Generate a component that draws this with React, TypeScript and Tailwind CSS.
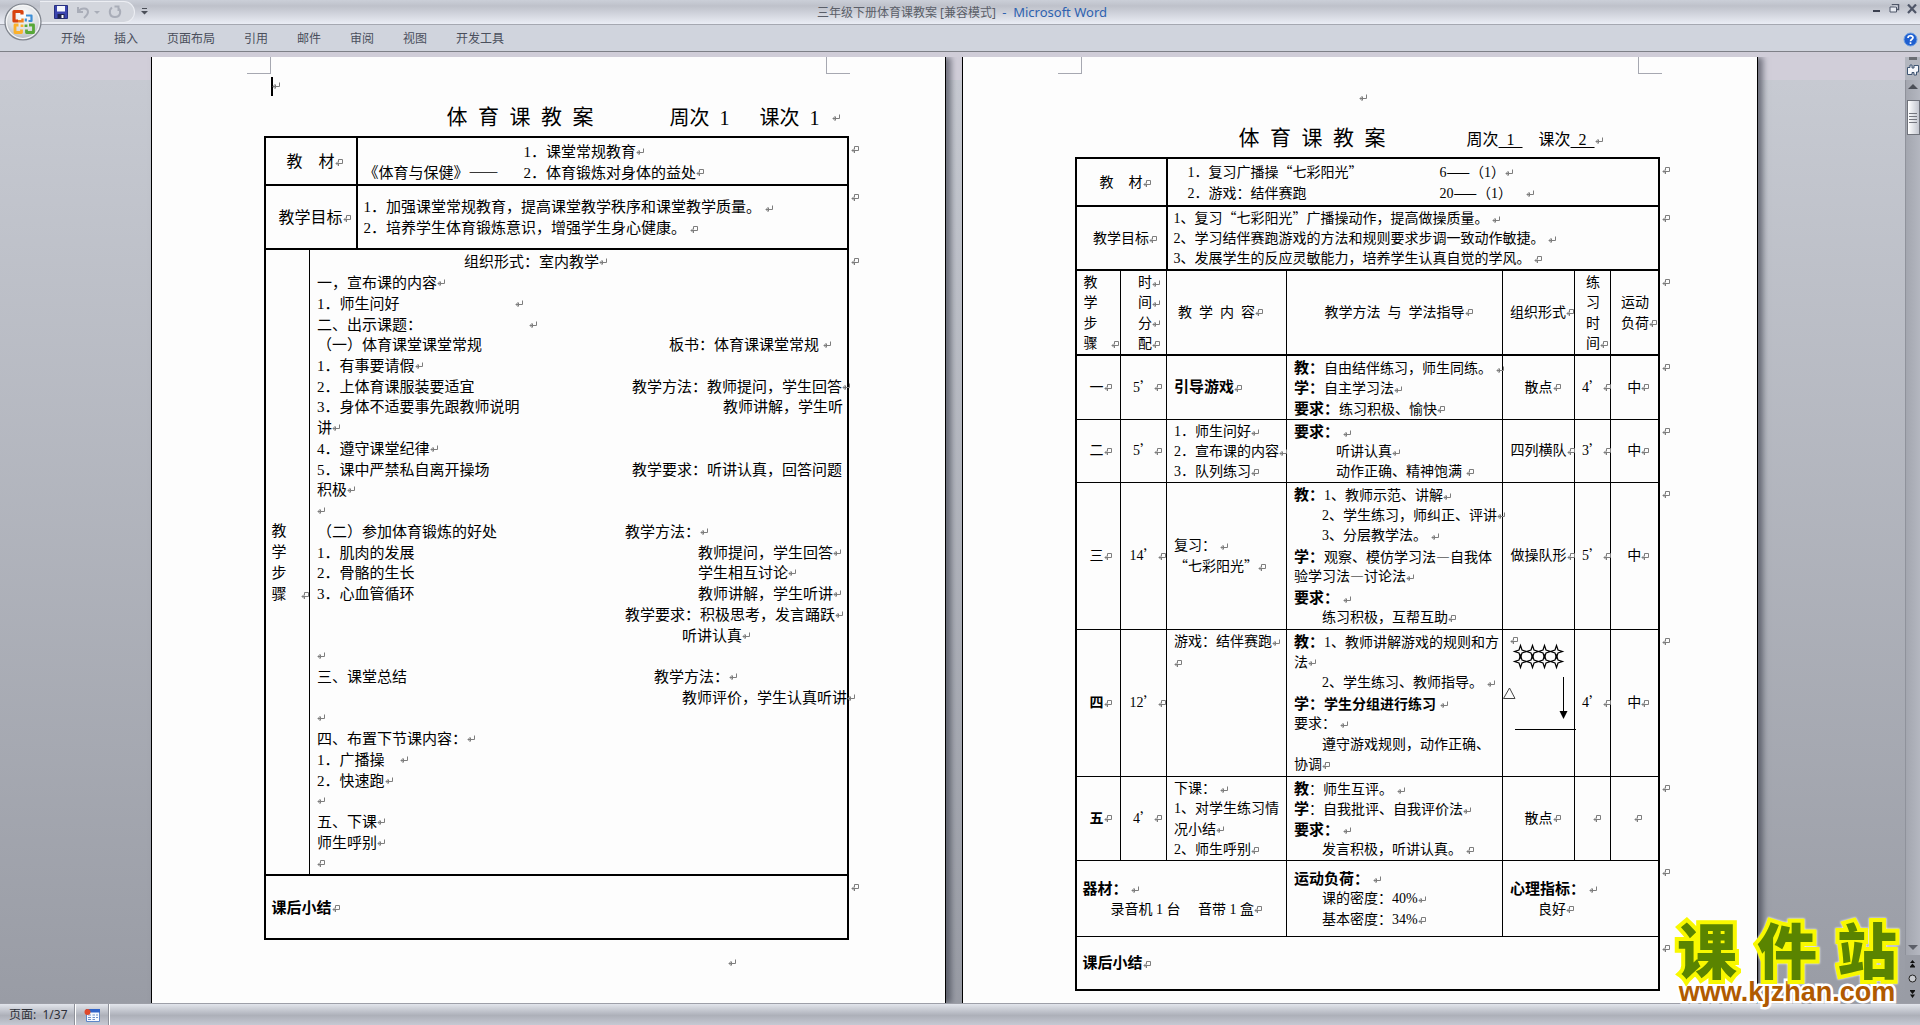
import React from "react";

const body = "font-['Liberation_Serif','Noto_Sans_CJK_SC',serif]";

/* Curly quotes and dashes take the full-width Chinese form. */
function T({ children }: { children: string }) {
  return (
    <>
      {children.split(/([“”’—]+)/).map((part, i) =>
        /[“”’—]/.test(part) ? (
          <span key={i} className="font-['Noto_Sans_CJK_SC',sans-serif] leading-none">
            {part}
          </span>
        ) : (
          part
        ),
      )}
    </>
  );
}

function Mark({ cell, className = "" }: { cell?: boolean; className?: string }) {
  return (
    <svg
      viewBox="0 0 8 8"
      className={`-mr-2 inline-block h-2 w-2 shrink-0 align-middle ${className}`}
      fill="none"
      stroke="#7d7d7d"
      strokeWidth="1"
      aria-hidden="true"
    >
      {cell ? <path d="M3.5 3.5V.5H7.5V4.5H1M3 2.5L1 4.5L3 6.5M3.5 5V7" /> : <path d="M7.5 .5V4.5H1M3.5 2L1 4.5L3.5 7M3.5 3V6" />}
    </svg>
  );
}

function RowEnd() {
  return (
    <span className="absolute top-2 left-full ml-1 flex">
      <Mark cell />
    </span>
  );
}

function Lines({ children, className = "" }: { children: React.ReactNode; className?: string }) {
  return <div className={`grid auto-rows-[minmax(0,1fr)] pt-[2px] leading-5 whitespace-pre ${className}`}>{children}</div>;
}

type LessonLine = { left?: string; col?: string; right?: string; mark?: "p" | "c" };

const lesson: LessonLine[] = [
  { col: "w-[147px]", right: "组织形式：室内教学", mark: "p" },
  { left: "一，宣布课的内容", mark: "p" },
  { left: "1．师生问好", col: "w-[198px]", mark: "p" },
  { left: "二、出示课题：", col: "w-[212px]", mark: "p" },
  { left: "（一）体育课堂课堂常规", col: "w-[352px]", right: "板书：体育课课堂常规 ", mark: "p" },
  { left: "1．有事要请假", mark: "p" },
  { left: "2．上体育课服装要适宜", col: "w-[315px]", right: "教学方法：教师提问，学生回答", mark: "p" },
  { left: "3．身体不适要事先跟教师说明", col: "w-[406px]", right: "教师讲解，学生听" },
  { left: "讲", mark: "p" },
  { left: "4．遵守课堂纪律", mark: "p" },
  { left: "5．课中严禁私自离开操场", col: "w-[315px]", right: "教学要求：听讲认真，回答问题" },
  { left: "积极", mark: "p" },
  { mark: "p" },
  { left: "（二）参加体育锻炼的好处", col: "w-[308px]", right: "教学方法：", mark: "p" },
  { left: "1．肌肉的发展", col: "w-[381px]", right: "教师提问，学生回答", mark: "p" },
  { left: "2．骨骼的生长", col: "w-[381px]", right: "学生相互讨论", mark: "p" },
  { left: "3．心血管循环", col: "w-[381px]", right: "教师讲解，学生听讲", mark: "p" },
  { col: "w-[308px]", right: "教学要求：积极思考，发言踊跃", mark: "p" },
  { col: "w-[365px]", right: "听讲认真", mark: "p" },
  { mark: "p" },
  { left: "三、课堂总结", col: "w-[337px]", right: "教学方法：", mark: "p" },
  { col: "w-[365px]", right: "教师评价，学生认真听讲", mark: "p" },
  { mark: "p" },
  { left: "四、布置下节课内容：", mark: "p" },
  { left: "1．广播操    ", mark: "p" },
  { left: "2．快速跑", mark: "p" },
  { mark: "p" },
  { left: "五、下课", mark: "p" },
  { left: "师生呼别", mark: "p" },
  { mark: "c" },
];

const sheet = "shrink-0 border-x border-black bg-[#fdfdfd] shadow-[5px_0_6px_0_rgba(50,54,66,0.6)]";

function Corners() {
  return (
    <div className="flex justify-between px-[95px]">
      <span className="h-[17px] w-6 border-r border-b border-[#a6a8b1]" />
      <span className="h-[17px] w-6 border-b border-l border-[#a6a8b1]" />
    </div>
  );
}

function PageOne() {
  return (
    <article className={`w-[795px] ${sheet}`}>
      <Corners />
      <div className="mt-[2px] flex h-5 items-center pl-[119px]">
        <span className="h-[19px] w-[2px] bg-black" />
        <Mark className="-ml-px" />
      </div>
      <div className="flex h-10 items-center pt-[3px] pl-[295px] whitespace-pre">
        <h1 className="text-[21px]">{"体\u2002育\u2002课\u2002教\u2002案"}</h1>
        <p className="ml-[76px] text-xl">{"周次\u20021\u2003\u2002课次\u20021"}</p>
        <Mark className="ml-3" />
      </div>
      <table className="ml-[112px] w-[585px] table-fixed border-collapse border-2 border-black text-[15px]">
        <colgroup>
          <col className="w-[45px]" />
          <col className="w-[47px]" />
          <col />
        </colgroup>
        <tbody>
          <tr className="h-12 border-b-2 border-black">
            <td colSpan={2} className="border-r-2 border-black p-0 pt-[2px] text-center text-base">
              教　材
              <Mark cell />
            </td>
            <td className="relative p-0">
              <Lines className="h-11 pl-[6px]">
                <div className="flex items-center">
                  <span className="w-40" />
                  <span>1．课堂常规教育</span>
                  <Mark />
                </div>
                <div className="flex items-center">
                  <span className="w-40"><T>《体育与保健》——</T></span>
                  <span>2．体育锻炼对身体的益处</span>
                  <Mark cell />
                </div>
              </Lines>
              <RowEnd />
            </td>
          </tr>
          <tr className="h-16 border-b-2 border-black">
            <td colSpan={2} className="border-r-2 border-black p-0 pt-[2px] text-center text-base">
              教学目标
              <Mark cell />
            </td>
            <td className="relative p-0">
              <Lines className="h-11 pl-[6px]">
                <div>
                  1．加强课堂常规教育，提高课堂教学秩序和课堂教学质量。 <Mark />
                </div>
                <div>
                  2．培养学生体育锻炼意识，增强学生身心健康。 <Mark cell />
                </div>
              </Lines>
              <RowEnd />
            </td>
          </tr>
          <tr className="h-[626px] border-b-2 border-black">
            <td className="border-r border-black p-0 pl-[6px]">
              <Lines className="h-[86px]">
                <div>教</div>
                <div>学</div>
                <div>步</div>
                <div>
                  骤<Mark cell className="ml-[14px]" />
                </div>
              </Lines>
            </td>
            <td colSpan={2} className="relative p-0">
              <Lines className="h-[624px] pl-[7px]">
                {lesson.map((l, i) => (
                  <div key={i} className="flex items-center">
                    <span className={`shrink-0 ${l.col ?? ""}`}>{l.left}</span>
                    <span>{l.right}</span>
                    {l.mark && <Mark cell={l.mark === "c"} />}
                  </div>
                ))}
              </Lines>
              <RowEnd />
            </td>
          </tr>
          <tr className="h-16">
            <td colSpan={3} className="relative p-0 pt-[2px] pl-[6px] font-bold">
              课后小结
              <Mark cell />
              <RowEnd />
            </td>
          </tr>
        </tbody>
      </table>
      <div className="mt-[10px] pl-[576px]">
        <Mark />
      </div>
    </article>
  );
}

function B({ children }: { children: string }) {
  return <b className="text-[15px] font-bold">{children}</b>;
}

type Step = {
  no: string;
  strong?: boolean;
  time: string;
  row: string;
  body: string;
  contentTop?: boolean;
  content: React.ReactNode;
  method: React.ReactNode[];
  form: React.ReactNode;
  practice: string;
  load: string;
};

function Formation() {
  const stars = [0, 12, 24, 36].flatMap((x) => [
    [x, 0],
    [x, 10],
  ]);
  return (
    <svg viewBox="0 0 76 146" className="absolute top-0 left-0 h-[146px] w-[76px]" fill="none" stroke="#000" strokeWidth="1" aria-label="队形图">
      {stars.map(([x, y]) => (
        <path
          key={`${x}-${y}`}
          transform={`translate(${x + 17.5} ${y + 21.5})`}
          d="M0 -6L1.5 -1.5L6 0L1.5 1.5L0 6L-1.5 1.5L-6 0L-1.5 -1.5Z"
          strokeWidth="1.2"
        />
      ))}
      <path d="M60.5 47V84M12 99.500H73" />
      <path d="M56.500 81H64.500L60.500 89Z" fill="#000" stroke="none" />
      <path d="M6.500 58L12 68.500H.5Z" stroke="#444" />
    </svg>
  );
}

const steps: Step[] = [
  {
    no: "一",
    time: "5’",
    row: "h-16",
    body: "h-[63px]",
    content: (
      <div>
        <B>引导游戏</B>
        <Mark cell />
      </div>
    ),
    method: [
      <><B>教：</B>自由结伴练习，师生同练。 <Mark /></>,
      <><B>学：</B>自主学习法<Mark /></>,
      <><B>要求：</B>练习积极、愉快<Mark cell /></>,
    ],
    form: "散点",
    practice: "4’",
    load: "中",
  },
  {
    no: "二",
    time: "5’",
    row: "h-[63px]",
    body: "h-[62px]",
    content: (
      <Lines className="h-[62px]">
        <div>1．师生问好<Mark /></div>
        <div>2．宣布课的内容<Mark /></div>
        <div>3．队列练习<Mark cell /></div>
      </Lines>
    ),
    method: [
      <><B>要求：</B> <Mark /></>,
      <>　　　听讲认真<Mark /></>,
      <>　　　动作正确、精神饱满 <Mark cell /></>,
    ],
    form: "四列横队",
    practice: "3’",
    load: "中",
  },
  {
    no: "三",
    time: "14’",
    row: "h-[147px]",
    body: "h-[146px]",
    content: (
      <Lines className="h-11">
        <div>复习： <Mark /></div>
        <div><T>“七彩阳光”</T><Mark cell /></div>
      </Lines>
    ),
    method: [
      <><B>教：</B>1、教师示范、讲解<Mark /></>,
      <>　　2、学生练习，师纠正、评讲<Mark /></>,
      <>　　3、分层教学法。 <Mark /></>,
      <><B>学：</B><T>观察、模仿学习法—自我体</T></>,
      <><T>验学习法—讨论法</T><Mark /></>,
      <><B>要求：</B> <Mark /></>,
      <>　　练习积极，互帮互助<Mark cell /></>,
    ],
    form: "做操队形",
    practice: "5’",
    load: "中",
  },
  {
    no: "四",
    strong: true,
    time: "12’",
    row: "h-[147px]",
    body: "h-[146px]",
    contentTop: true,
    content: (
      <Lines className="h-11">
        <div>游戏：结伴赛跑<Mark /></div>
        <div><Mark cell /></div>
      </Lines>
    ),
    method: [
      <><B>教：</B>1、教师讲解游戏的规则和方</>,
      <>法<Mark /></>,
      <>　　2、学生练习、教师指导。 <Mark /></>,
      <><B>学：</B><b>学生分组进行练习</b> <Mark /></>,
      <>要求： <Mark /></>,
      <>　　遵守游戏规则，动作正确、</>,
      <>协调<Mark cell /></>,
    ],
    form: <Formation />,
    practice: "4’",
    load: "中",
  },
  {
    no: "五",
    strong: true,
    time: "4’",
    row: "h-[84px]",
    body: "h-[83px]",
    content: (
      <Lines className="h-[83px]">
        <div>下课： <Mark /></div>
        <div>1、对学生练习情</div>
        <div>况小结<Mark /></div>
        <div>2、师生呼别<Mark cell /></div>
      </Lines>
    ),
    method: [
      <><B>教</B>：师生互评。 <Mark /></>,
      <><B>学</B>：自我批评、自我评价法<Mark /></>,
      <><B>要求：</B> <Mark /></>,
      <>　　发言积极，听讲认真。 <Mark cell /></>,
    ],
    form: "散点",
    practice: "",
    load: "",
  },
];

const cell = "relative border-r border-black p-0 whitespace-nowrap";

function PageTwo() {
  return (
    <article className={`w-[796px] ${sheet}`}>
      <Corners />
      <div className="flex h-[46px] items-center pt-[2px] pl-[396px]">
        <Mark />
      </div>
      <div className="flex h-[37px] items-center pl-[276px] whitespace-pre">
        <h2 className="text-[21px]">{"体\u2002育\u2002课\u2002教\u2002案"}</h2>
        <p className="ml-[81px] pt-[2px] text-base">
          周次<u className="underline-offset-2">{"\u20021\u2002"}</u>
          {"\u2003"}课次<u className="underline-offset-2">{"\u20022\u2002"}</u>
        </p>
        <Mark className="mt-1" />
      </div>
      <table className="ml-[112px] w-[585px] table-fixed border-collapse border-2 border-black text-sm">
        <colgroup>
          <col className="w-[45px]" />
          <col className="w-[46px]" />
          <col className="w-[120px]" />
          <col className="w-[216px]" />
          <col className="w-[72px]" />
          <col className="w-[36px]" />
          <col />
        </colgroup>
        <tbody>
          <tr className="h-12 border-b-2 border-black">
            <td colSpan={2} className="border-r-2 border-black p-0 pt-[2px] text-center">
              {"教　\u200a材"}
              <Mark cell />
            </td>
            <td colSpan={5} className="relative p-0">
              <Lines className="h-11 pl-5">
                <div className="flex items-center">
                  <span className="w-[252px]"><T>1．复习广播操“七彩阳光”</T></span>
                  <span><T>6——（1）</T></span>
                  <Mark />
                </div>
                <div className="flex items-center">
                  <span className="w-[252px]">2．游戏：结伴赛跑</span>
                  <span><T>{"20——（1）\u2003"}</T></span>
                  <Mark />
                </div>
              </Lines>
              <RowEnd />
            </td>
          </tr>
          <tr className="h-16 border-b-2 border-black">
            <td colSpan={2} className="border-r-2 border-black p-0 pt-[2px] text-center">
              教学目标
              <Mark cell />
            </td>
            <td colSpan={5} className="relative p-0">
              <Lines className="h-[62px] pl-[6px]">
                <div><T>1、复习“七彩阳光”广播操动作，提高做操质量。 </T><Mark /></div>
                <div>2、学习结伴赛跑游戏的方法和规则要求步调一致动作敏捷。 <Mark /></div>
                <div>3、发展学生的反应灵敏能力，培养学生认真自觉的学风。 <Mark cell /></div>
              </Lines>
              <RowEnd />
            </td>
          </tr>
          <tr className="h-[85px] border-b-2 border-black">
            <td className={`${cell} pl-[7px]`}>
              <Lines className="h-[83px]">
                <div>教</div>
                <div>学</div>
                <div>步</div>
                <div>骤<Mark cell className="ml-[13px]" /></div>
              </Lines>
            </td>
            <td className={`${cell} pl-[17px]`}>
              <Lines className="h-[83px]">
                <div>时<Mark /></div>
                <div>间<Mark /></div>
                <div>分<Mark /></div>
                <div>配<Mark cell /></div>
              </Lines>
            </td>
            <td className={`${cell} pl-[11px]`}>{"教\u2002学\u2002内\u2002容"}<Mark cell /></td>
            <td className={`${cell} text-center`}>{"教学方法\u2002与\u2002学法指导"}<Mark cell /></td>
            <td className={`${cell} pl-[7px]`}>组织形式<Mark cell /></td>
            <td className={`${cell} pl-[11px]`}>
              <Lines className="h-[83px]">
                <div>练</div>
                <div>习</div>
                <div>时</div>
                <div>间<Mark cell /></div>
              </Lines>
            </td>
            <td className="relative p-0 pl-[10px]">
              <Lines className="h-11">
                <div>运动</div>
                <div>负荷<Mark cell /></div>
              </Lines>
              <RowEnd />
            </td>
          </tr>
          {steps.map((s) => (
            <tr key={s.no} className={`${s.row} border-b border-black`}>
              <td className={`${cell} pl-[13px] ${s.strong ? "font-bold" : ""}`}>{s.no}<Mark cell /></td>
              <td className={`${cell} text-center`}><T>{s.time}</T><Mark cell /></td>
              <td className={`${cell} pl-[7px] ${s.contentTop ? "align-top" : ""}`}>{s.content}</td>
              <td className={`${cell} pl-[7px]`}>
                <Lines className={s.body}>
                  {s.method.map((m, i) => (
                    <div key={i}>{m}</div>
                  ))}
                </Lines>
              </td>
              {typeof s.form === "string" ? (
                <td className={`${cell} text-center`}>{s.form}<Mark cell /></td>
              ) : (
                <td className={`${cell} pl-[7px] align-top`}><Mark cell />{s.form}</td>
              )}
              <td className={`${cell} text-center`}><T>{s.practice}</T><Mark cell /></td>
              <td className="relative p-0 text-center">
                {s.load}
                <Mark cell />
                <RowEnd />
              </td>
            </tr>
          ))}
          <tr className="h-[76px] border-b border-black">
            <td colSpan={3} className={`${cell} pl-[6px]`}>
              <Lines className="h-11">
                <div><B>器材：</B> <Mark /></div>
                <div>　　录音机 1 台{"\u2003 "}音带 1 盒<Mark cell /></div>
              </Lines>
            </td>
            <td className={`${cell} pl-[7px]`}>
              <Lines className="h-16">
                <div><B>运动负荷：</B> <Mark /></div>
                <div>　　课的密度：40%<Mark /></div>
                <div>　　基本密度：34%<Mark cell /></div>
              </Lines>
            </td>
            <td colSpan={3} className="relative p-0 pl-[7px]">
              <Lines className="h-11">
                <div><B>心理指标：</B> <Mark /></div>
                <div>　　良好<Mark cell /></div>
              </Lines>
              <RowEnd />
            </td>
          </tr>
          <tr className="h-[53px]">
            <td colSpan={7} className="relative p-0 pt-[2px] pl-[6px]">
              <B>课后小结</B>
              <Mark cell />
              <RowEnd />
            </td>
          </tr>
        </tbody>
      </table>
    </article>
  );
}

function OfficeLogo() {
  return (
    <svg viewBox="0 0 38 38" className="h-[38px] w-[38px]">
      <defs>
        <radialGradient id="orb" cx="50%" cy="30%" r="75%">
          <stop offset="0" stopColor="#ffffff" />
          <stop offset="0.6" stopColor="#d9dce0" />
          <stop offset="1" stopColor="#a9adb3" />
        </radialGradient>
      </defs>
      <circle cx="19" cy="19" r="18" fill="url(#orb)" stroke="#7f848d" strokeWidth="1.200" />
      <circle cx="19" cy="19" r="16.500" fill="none" stroke="#f6f7f8" strokeWidth="1.200" />
      <path d="M18 11.500V8.500H10V18H14" fill="none" stroke="#d8430f" strokeWidth="3.200" strokeLinejoin="round" />
      <path d="M14 18.300H18.500V15.500" fill="none" stroke="#f0801e" strokeWidth="2.400" />
      <path d="M22 12.500H27.500V18H24.500M21.800 15.500V18.500" fill="none" stroke="#3f8fd6" strokeWidth="2.200" strokeLinejoin="round" />
      <path d="M14.500 22H11V29.500H17.500V26.500M18 24V21.500" fill="none" stroke="#fbb12a" strokeWidth="2.800" strokeLinejoin="round" />
      <path d="M25 22H29.500V29.500H22.500V26.500M22 24V21.500" fill="none" stroke="#58a838" strokeWidth="2.800" strokeLinejoin="round" />
    </svg>
  );
}

const tabs = ["开始", "插入", "页面布局", "引用", "邮件", "审阅", "视图", "开发工具"];

export default function App() {
  return (
    <div lang="zh-CN" className="relative flex h-screen flex-col overflow-hidden bg-[#d0cdd8] font-['Noto_Sans','Noto_Sans_CJK_SC',sans-serif] text-black">
      <header className="relative shrink-0">
        <div className="relative flex h-[25px] items-start justify-center border-b border-[#a5a8b1] bg-linear-to-b from-[#cbcfd8] via-[#bec1ca] via-25% to-[#eaedf5] pl-1">
          <div className="absolute top-px left-10 flex h-[22px] w-[95px] items-center rounded-r-full border border-l-0 border-[#eceef3] bg-[#d3d6dd] pl-[14px]">
            <button aria-label="保存">
              <svg viewBox="0 0 14 14" className="h-[14px] w-[14px]">
                <path d="M.5 .5H13.500V13.500H.5Z" fill="#3b45b0" stroke="#27307f" />
                <path d="M3 1H11V6.500H3Z" fill="#f4f7fd" />
                <path d="M3.500 9H10.500V13.500H3.500Z" fill="#1d2250" />
                <path d="M7.500 10H9.500V13H7.500Z" fill="#fff" />
              </svg>
            </button>
            <button aria-label="撤消" className="ml-2">
              <svg viewBox="0 0 14 14" className="h-[14px] w-[14px]" fill="none" stroke="#a9adb8" strokeWidth="2">
                <path d="M2 2V7H7M2.500 6.500C5 2.500 12 2.500 12 7C12 9.500 10 11 8 13" />
              </svg>
            </button>
            <span className="ml-1 border-x-3 border-t-3 border-x-transparent border-t-[#a9adb8]" />
            <button aria-label="恢复" className="ml-2">
              <svg viewBox="0 0 14 14" className="h-[14px] w-[14px]" fill="none" stroke="#a9adb8" strokeWidth="2">
                <path d="M4 2.500C.5 5 1 12 7 12S13.500 5 10 3M6.500 1.500H10.500V6" />
              </svg>
            </button>
          </div>
          <button aria-label="自定义快速访问工具栏" className="absolute top-2 left-[141px]">
            <svg viewBox="0 0 7 7" className="h-[7px] w-[7px]" fill="#4b4f58">
              <path d="M1 0H6V1H1ZM0 3H7L3.500 6.500Z" />
            </svg>
          </button>
          <p className="pt-[3px] text-xs leading-[18px] whitespace-pre text-[#5a5e68]">
            三年级下册体育课教案 [兼容模式]  <span className="text-[13px] text-[#2e62b0]">-  Microsoft Word</span>
          </p>
          <div className="absolute top-1 right-[2px] flex gap-[6px]">
            <button aria-label="最小化">
              <svg viewBox="0 0 12 10" className="h-[10px] w-3"><path d="M3 7H10" stroke="#3c4150" strokeWidth="2" /></svg>
            </button>
            <button aria-label="还原">
              <svg viewBox="0 0 12 10" className="h-[10px] w-3" fill="#e8ebf2" stroke="#4f5668">
                <path d="M4.500 1V.5H10.500V5.500H9" strokeWidth="1.500" />
                <path d="M2 3H8.500V8H2Z" />
              </svg>
            </button>
            <button aria-label="关闭">
              <svg viewBox="0 0 12 10" className="h-[10px] w-3" fill="none" stroke="#4f5668" strokeWidth="2.200"><path d="M2 .5L10 9M10 .5L2 9" /></svg>
            </button>
          </div>
        </div>
        <nav className="flex h-[27px] items-center gap-[29px] border-b border-[#7e8087] bg-[#d0d4dd] pt-[2px] pr-[2px] pl-[61px] text-xs text-[#4a4f5c]">
          {tabs.map((t) => (
            <button key={t}>{t}</button>
          ))}
          <button aria-label="帮助" className="ml-auto">
            <svg viewBox="0 0 15 15" className="h-[15px] w-[15px]">
              <circle cx="7.500" cy="7.500" r="6.500" fill="#1f5fd0" stroke="#6f9fe0" />
              <path d="M5 6C5 3 10 3 10 5.800C10 7.300 7.500 7.200 7.500 9.200M7.500 10.300V12" fill="none" stroke="#fff" strokeWidth="1.700" />
            </svg>
          </button>
        </nav>
        <div className="absolute top-[3px] left-1">
          <button aria-label="Office 按钮"><OfficeLogo /></button>
        </div>
      </header>

      <div className="mt-[5px] flex min-h-0 flex-1">
        <main className={`flex min-w-0 flex-1 justify-center gap-4 overflow-hidden bg-[linear-gradient(#d1ced9_0_23px,#c7cad2_23px,#999ca5)] pl-[3px] ${body}`}>
          <PageOne />
          <PageTwo />
        </main>
        <aside className="flex w-[15px] shrink-0 flex-col items-center bg-[#b3b6bf]">
          <span className="h-[3px] w-2 bg-[#6b6d73]" />
          <svg viewBox="0 0 12 12" className="mt-1 h-3 w-3" fill="#f5f6fa" stroke="#3f5573">
            <path d="M.5 3.500H3V1H5V4H7V1.500H11.500V8H9.500V11H7V8.500H5V10.500H.5Z" />
          </svg>
          <div className="mt-1 flex w-full flex-1 flex-col items-center border-l border-[#8f929b] bg-linear-to-r from-[#a3a6af] to-[#b4b7c0]">
            <button aria-label="向上滚动" className="mt-1 border-x-[5px] border-b-[5px] border-x-transparent border-b-[#4c4f57]" />
            <div className="mt-[11px] flex h-[35px] w-[13px] flex-col items-center justify-center gap-px border border-[#6f727a] bg-linear-to-r from-white to-[#c3c6cf]">
              <span className="h-px w-2 bg-[#75777f]" />
              <span className="mt-px h-px w-2 bg-[#75777f]" />
              <span className="mt-px h-px w-2 bg-[#75777f]" />
              <span className="mt-px h-px w-2 bg-[#75777f]" />
            </div>
            <button aria-label="向下滚动" className="mt-auto mb-[5px] border-x-[5px] border-t-[5px] border-x-transparent border-t-[#5c5f68]" />
          </div>
          <svg viewBox="0 0 15 48" className="h-12 w-[15px] bg-[#999ca5]">
            <path d="M5 8H10L7.500 5ZM5 11.500H10L7.500 8.500ZM5 11.500H10V12.500H5ZM5 36H10L7.500 39ZM5 39.500H10L7.500 43ZM5 35H10V36H5Z" fill="#111" />
            <circle cx="7.500" cy="23.500" r="3.500" fill="#c9cbd0" stroke="#222" />
          </svg>
        </aside>
      </div>

      <footer className="flex h-[22px] shrink-0 items-stretch border-t border-[#9d9fa8] bg-linear-to-b from-[#e2e5ec] via-[#adb0b9] via-55% to-[#c6c9d3] text-[#2d3038]">
        <span className="flex w-[75px] items-center border-r border-[#8e919a] pl-[9px] text-xs whitespace-pre">页面:  1/37</span>
        <button aria-label="宏" className="flex w-[34px] items-center justify-center border-r border-l border-r-[#8e919a] border-l-white">
          <svg viewBox="0 0 16 14" className="h-[14px] w-4">
            <path d="M2.500 1.500H15.500V13.500H2.500Z" fill="#f6f9ff" stroke="#5e86c8" />
            <path d="M2 1H16V4.500H2Z" fill="#2f63c8" />
            <path d="M4 7H7M8.500 7H11M12 7H14M4 9.500H7M8.500 9.500H11M12 9.500H14M4 11.500H7M8.500 11.500H11" stroke="#6f90c8" />
            <circle cx="3.500" cy="4" r="3" fill="#e0492a" />
          </svg>
        </button>
        <span className="border-l border-white" />
      </footer>

      <div className="pointer-events-none absolute right-[13px] bottom-5 flex w-[240px] flex-col items-center">
        <div className="flex h-[62px] w-full items-center justify-around font-['Noto_Sans_CJK_SC',sans-serif] text-[60px] leading-none font-black text-[#5a8400]">
          {["课", "件", "站"].map((c) => (
            <span key={c} className="[-webkit-text-stroke:8px_#f8f800] [paint-order:stroke_fill] drop-shadow-[0_0_1px_#ffffff]">
              {c}
            </span>
          ))}
        </div>
        <span className="font-['Liberation_Sans',sans-serif] text-[27px] leading-[26px] font-bold text-[#b05a00] [-webkit-text-stroke:5px_#ffffff] [paint-order:stroke_fill]">
          www.kjzhan.com
        </span>
      </div>
    </div>
  );
}
